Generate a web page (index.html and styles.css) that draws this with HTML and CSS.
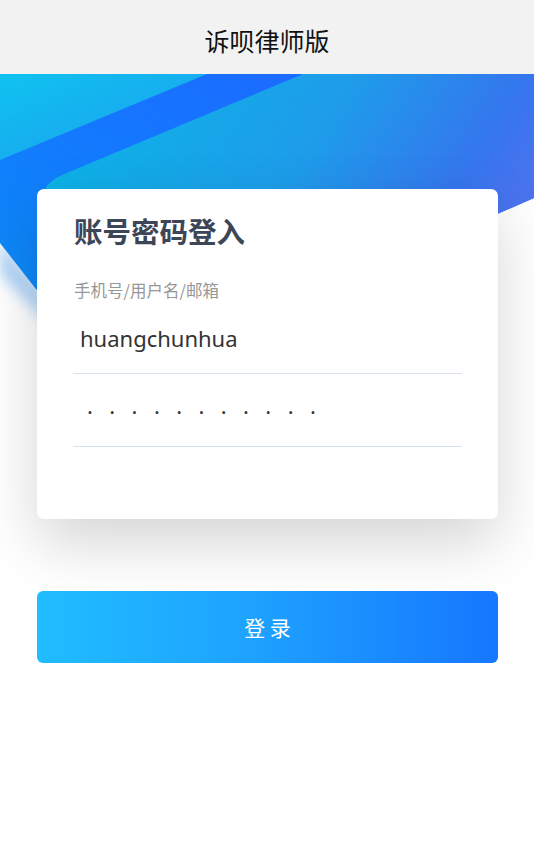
FILE: index.html
```html
<!DOCTYPE html>
<html lang="zh-CN">
<head>
<meta charset="utf-8">
<title>诉呗律师版</title>
<link rel="stylesheet" href="styles.css">
</head>
<body>
<header class="topbar">
  <h1 class="topbar-title">诉呗律师版</h1>
</header>
<main class="page">
  <svg class="hero-bg" viewBox="0 0 534 320" width="534" height="320" aria-hidden="true">
    <defs>
      <linearGradient id="gDark" x1="0" y1="1" x2="1" y2="0">
        <stop offset="0" stop-color="#0893f4"/>
        <stop offset="0.5" stop-color="#1478ff"/>
        <stop offset="1" stop-color="#2160ff"/>
      </linearGradient>
      <linearGradient id="gCyan" x1="0" y1="0" x2="1" y2="1">
        <stop offset="0" stop-color="#0fc2f0"/>
        <stop offset="1" stop-color="#1d9cee"/>
      </linearGradient>
      <linearGradient id="gLight" x1="0" y1="0.3" x2="1" y2="0.7">
        <stop offset="0" stop-color="#0cb3e6"/>
        <stop offset="0.45" stop-color="#1e9cea"/>
        <stop offset="0.75" stop-color="#3576ee"/>
        <stop offset="1" stop-color="#6070f0"/>
      </linearGradient>
      <filter id="blur" x="-50%" y="-50%" width="200%" height="200%">
        <feGaussianBlur stdDeviation="7"/>
      </filter>
    </defs>
    <path d="M0 165 L60 240 L60 262 L0 200 Z" fill="#6fb0f2" opacity="0.55" filter="url(#blur)"/>
    <path d="M0 0 H534 V124 L110 310 L0 169 Z" fill="url(#gDark)"/>
    <path d="M0 0 H207 L0 86 Z" fill="url(#gCyan)"/>
    <path d="M303 0 H534 V124 L100 310 L44 140 Q36 112 62 101 Z" fill="url(#gLight)"/>
  </svg>

  <section class="card">
    <h2 class="card-title">账号密码登入</h2>
    <p class="field-label">手机号/用户名/邮箱</p>
    <div class="field"><span class="field-value">huangchunhua</span></div>
    <div class="field"><span class="field-dots">···········</span></div>
  </section>

  <button class="login-btn" type="button">登 录</button>
</main>
</body>
</html>
```

FILE: styles.css
```css
* { box-sizing: border-box; }

html, body {
  margin: 0;
  padding: 0;
  background: #ffffff;
  font-family: "Noto Sans", "Noto Sans CJK SC", sans-serif;
}

.topbar {
  height: 74px;
  background: #f2f2f2;
  display: flex;
  align-items: center;
  justify-content: center;
}

.topbar-title {
  margin: 0;
  padding-top: 6px;
  font-family: "Noto Sans CJK SC", sans-serif;
  font-size: 25px;
  font-weight: 400;
  color: #111111;
  line-height: 1;
}

.page {
  position: relative;
  padding: 115px 36px 120px 37px;
  overflow: hidden;
}

.hero-bg {
  position: absolute;
  left: 0;
  top: 0;
  z-index: 0;
  display: block;
}

.card {
  position: relative;
  z-index: 1;
  background: #ffffff;
  border-radius: 7px;
  padding: 22px 36px 72px 36px;
  box-shadow: 0 24px 60px rgba(0, 0, 0, 0.17);
}

.card-title {
  margin: 0;
  padding-left: 1px;
  font-family: "Noto Sans CJK SC", sans-serif;
  font-size: 28.5px;
  font-weight: 700;
  line-height: 40px;
  color: #3c4656;
}

.field-label {
  margin: 28px 0 0 1px;
  font-family: "Noto Sans CJK SC", sans-serif;
  font-size: 16.5px;
  line-height: 22px;
  color: #979797;
}

.field {
  height: 73px;
  border-bottom: 1px solid #d8e1ee;
  display: flex;
  align-items: center;
  padding-left: 7px;
}

.field-value {
  font-family: "Noto Sans", sans-serif;
  font-size: 22px;
  color: #333333;
  padding-top: 1px;
}

.field-dots {
  font-family: "Noto Sans", sans-serif;
  font-size: 22px;
  letter-spacing: 16.4px;
  color: #333333;
  padding-left: 7px;
  padding-top: 1px;
}

.login-btn {
  position: relative;
  z-index: 1;
  display: flex;
  align-items: center;
  justify-content: center;
  width: 100%;
  height: 72px;
  margin-top: 72px;
  border: none;
  border-radius: 6px;
  background: linear-gradient(90deg, #20bdff 0%, #1ea3ff 45%, #1677ff 100%);
  color: #ffffff;
  font-family: "Noto Sans CJK SC", sans-serif;
  font-size: 21px;
  padding: 0;
}
```
